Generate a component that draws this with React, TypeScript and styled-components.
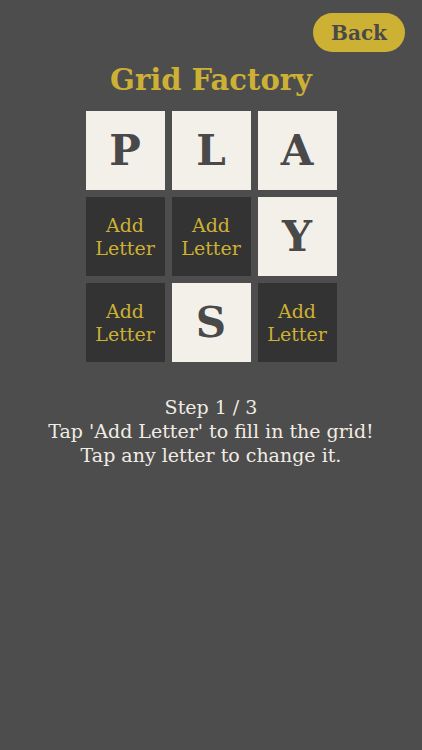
import React from "react";
import styled, { createGlobalStyle } from "styled-components";

const Global = createGlobalStyle`
  html, body { margin: 0; padding: 0; background: #4d4d4d; }
  body { font-family: "DejaVu Serif", "Liberation Serif", serif; }
`;

const Page = styled.div`
  width: 422px;
  height: 750px;
  background: #4d4d4d;
  display: flex;
  flex-direction: column;
  align-items: center;
  box-sizing: border-box;
  padding-top: 13px;
`;

const TopBar = styled.div`
  width: 100%;
  display: flex;
  justify-content: flex-end;
  padding-right: 17px;
  box-sizing: border-box;
`;

const BackButton = styled.button`
  width: 92px;
  height: 39px;
  border: none;
  border-radius: 20px;
  background: #cdb134;
  color: #494949;
  font-family: "DejaVu Serif", serif;
  font-weight: bold;
  font-size: 20px;
  padding: 0;
  display: flex;
  align-items: center;
  justify-content: center;
`;

const Title = styled.h1`
  margin: 10px 0 0;
  font-family: "DejaVu Serif", serif;
  font-weight: bold;
  font-size: 29px;
  line-height: 36px;
  color: #cdb134;
`;

const Grid = styled.div`
  margin-top: 13px;
  display: grid;
  grid-template-columns: repeat(3, 79px);
  grid-auto-rows: 79px;
  gap: 7px;
`;

const Tile = styled.div<{ $filled: boolean }>`
  background: ${(p) => (p.$filled ? "#f3efe9" : "#333333")};
  color: ${(p) => (p.$filled ? "#494949" : "#cdb134")};
  display: flex;
  align-items: center;
  justify-content: center;
  text-align: center;
  font-family: "DejaVu Serif", serif;
  font-weight: ${(p) => (p.$filled ? "bold" : "normal")};
  font-size: ${(p) => (p.$filled ? "42px" : "19px")};
  line-height: ${(p) => (p.$filled ? "1" : "23px")};
`;

const Info = styled.div`
  margin-top: 33px;
  text-align: center;
  color: #f1ece4;
  font-family: "DejaVu Serif", serif;
  font-size: 19px;
  line-height: 24px;
`;

const cells: (string | null)[] = ["P", "L", "A", null, null, "Y", null, "S", null];

export default function App() {
  return (
    <>
      <Global />
      <Page>
        <TopBar>
          <BackButton>Back</BackButton>
        </TopBar>
        <Title>Grid Factory</Title>
        <Grid>
          {cells.map((c, i) => (
            <Tile key={i} $filled={c !== null}>
              {c !== null ? c : (<>Add<br />Letter</>)}
            </Tile>
          ))}
        </Grid>
        <Info>
          Step 1 / 3<br />
          Tap 'Add Letter' to fill in the grid!<br />
          Tap any letter to change it.
        </Info>
      </Page>
    </>
  );
}
